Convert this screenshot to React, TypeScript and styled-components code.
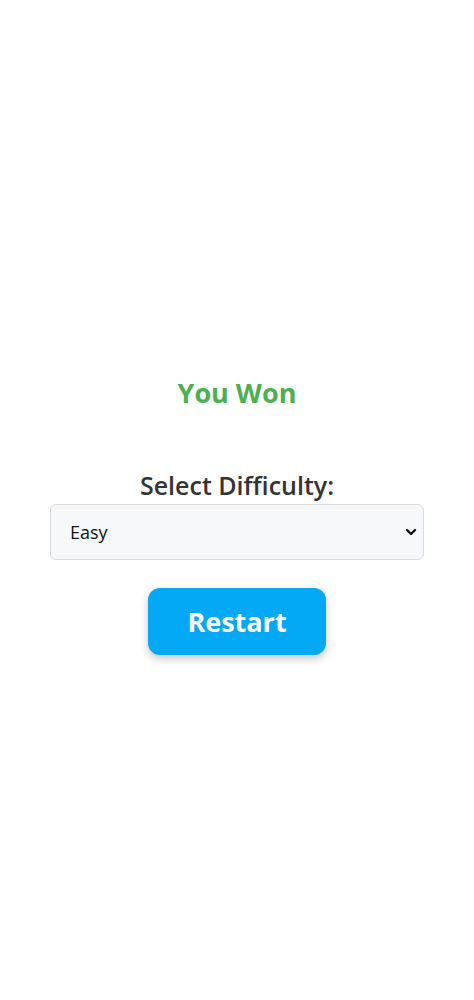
import React, { useState } from 'react';
import styled, { createGlobalStyle } from 'styled-components';

const GlobalStyle = createGlobalStyle`
  html, body {
    margin: 0;
    padding: 0;
    background: #ffffff;
    font-family: "Open Sans", "Liberation Sans", sans-serif;
  }
`;

const Page = styled.div`
  min-height: 100vh;
  display: flex;
  flex-direction: column;
  align-items: center;
  justify-content: center;
  box-sizing: border-box;
`;

const Status = styled.h2<{ $won: boolean }>`
  margin: 30px 0 58px;
  font-size: 27px;
  line-height: 36px;
  font-weight: 700;
  color: ${p => (p.$won ? '#4caf50' : '#e53935')};
`;

const Label = styled.label`
  font-size: 25px;
  line-height: 32px;
  font-weight: 600;
  color: #333333;
  margin-bottom: 3px;
`;

const SelectWrap = styled.div`
  position: relative;
  width: 374px;
`;

const Select = styled.select`
  appearance: none;
  -webkit-appearance: none;
  width: 100%;
  height: 56px;
  box-sizing: border-box;
  padding: 0 40px 0 19px;
  font-family: inherit;
  font-size: 18px;
  color: #111111;
  background: #f7f8fa;
  border: 1px solid #dcdcdc;
  border-radius: 6px;
  outline: none;
`;

const Chevron = styled.svg`
  position: absolute;
  right: 6px;
  top: 50%;
  transform: translateY(-50%);
  pointer-events: none;
`;

const RestartButton = styled.button`
  margin-top: 28px;
  width: 178px;
  height: 67px;
  border: none;
  border-radius: 12px;
  background: #03a9f4;
  color: #ffffff;
  font-family: inherit;
  font-size: 27px;
  font-weight: 700;
  box-shadow: 0 4px 8px rgba(0, 0, 0, 0.22);
  cursor: pointer;
`;

const App = () => {
  const [difficulty, setDifficulty] = useState('easy');

  return (
    <Page>
      <GlobalStyle />
      <Status $won={true}>You Won</Status>
      <Label htmlFor="difficulty">Select Difficulty:</Label>
      <SelectWrap>
        <Select id="difficulty" value={difficulty} onChange={e => setDifficulty(e.target.value)}>
          <option value="easy">Easy</option>
          <option value="medium">Medium</option>
          <option value="hard">Hard</option>
        </Select>
        <Chevron width="14" height="14" viewBox="0 0 14 14">
          <path d="M3 5 L7 9 L11 5" fill="none" stroke="#111" strokeWidth="2.4" strokeLinecap="round" strokeLinejoin="round" />
        </Chevron>
      </SelectWrap>
      <RestartButton>Restart</RestartButton>
    </Page>
  );
};

export default App;
